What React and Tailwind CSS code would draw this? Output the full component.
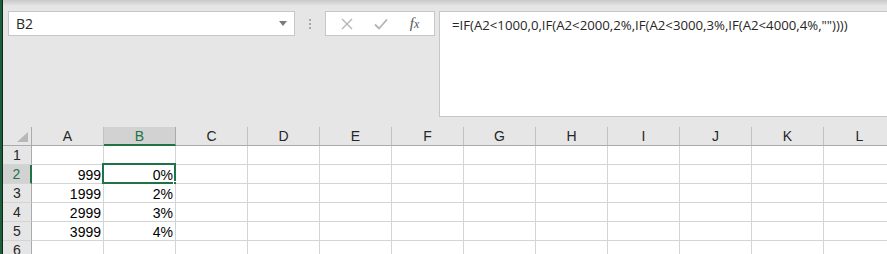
import React from 'react';

const cols = ['A', 'B', 'C', 'D', 'E', 'F', 'G', 'H', 'I', 'J', 'K', 'L'];

// rows of sheet data: [A, B]
const data = {
  2: ['999', '0%'],
  3: ['1999', '2%'],
  4: ['2999', '3%'],
  5: ['3999', '4%'],
};

const FORMULA = '=IF(A2<1000,0,IF(A2<2000,2%,IF(A2<3000,3%,IF(A2<4000,4%,""))))';

const ColHeader = ({ label }) => {
  const active = label === 'B';
  return (
    <div
      className={`h-[19px] flex items-center justify-center border-r text-[14px] leading-none ${
        active
          ? 'bg-[#d2d2d2] text-[#217346] border-b-2 border-b-[#217346] border-r-[#ababab]'
          : 'bg-[#e6e6e6] text-[#262626] border-b border-b-[#ababab] border-r-[#c0c0c0]'
      }`}
    >
      {label}
    </div>
  );
};

const RowHeader = ({ n }) => {
  const active = n === 2;
  return (
    <div
      className={`h-[19px] flex items-center justify-center border-b border-b-[#d4d4d4] text-[14px] leading-none ${
        active
          ? 'bg-[#d2d2d2] text-[#217346] border-r-2 border-r-[#217346]'
          : 'bg-[#e6e6e6] text-[#262626] border-r border-r-[#ababab]'
      }`}
    >
      {n}
    </div>
  );
};

const Cell = ({ value, selected }) => (
  <div className="relative h-[19px] bg-white border-r border-b border-[#d4d4d4] flex items-center justify-end pr-[2px] pt-[2px] text-[14px] leading-none text-black">
    {value}
    {selected && (
      <>
        <div className="absolute left-[-2px] top-[-2px] right-[-1px] bottom-[-1px] border-2 border-[#217346]" />
        <div className="absolute right-[-4px] bottom-[-4px] w-[6px] h-[6px] bg-[#217346] border border-white" />
      </>
    )}
  </div>
);

export default function App() {
  return (
    <div
      className="w-[887px] h-[254px] overflow-hidden flex bg-[#e6e6e6]"
      style={{ fontFamily: '"Liberation Sans", Arial, sans-serif' }}
    >
      {/* window edge */}
      <div className="w-[3px] shrink-0 bg-[#1d5e3a] border-r border-[#0f2a1c]" />

      <div className="flex-1 flex flex-col min-w-0">
        {/* top shadow */}
        <div className="h-[6px] shrink-0 bg-gradient-to-b from-[#c9c9c9] to-[#e6e6e6]" />

        {/* formula bar */}
        <div className="flex items-start pt-[5px] h-[116px] shrink-0">
          <div className="ml-[5px] w-[287px] h-[25px] bg-white border border-[#c6c6c6] flex items-center justify-between pl-[7px] pr-[7px]">
            <span className="text-[14px] text-[#262626]" style={{ fontFamily: '"Open Sans", sans-serif' }}>B2</span>
            <svg width="8" height="5" viewBox="0 0 8 5">
              <path d="M0 0h8L4 5z" fill="#7a7a7a" />
            </svg>
          </div>

          <div className="w-[30px] h-[25px] flex flex-col items-center justify-center gap-[2px]">
            <span className="w-[2px] h-[2px] bg-[#a8a8a8]" />
            <span className="w-[2px] h-[2px] bg-[#a8a8a8]" />
            <span className="w-[2px] h-[2px] bg-[#a8a8a8]" />
          </div>

          <div className="w-[110px] h-[25px] bg-white border border-[#c6c6c6] flex items-center justify-around px-[4px]">
            <svg width="12" height="12" viewBox="0 0 12 12">
              <path d="M1 1l10 10M11 1L1 11" stroke="#b3b3b3" strokeWidth="1.3" fill="none" />
            </svg>
            <svg width="14" height="12" viewBox="0 0 14 12">
              <path d="M1 6.5l4 4L13 1.5" stroke="#b3b3b3" strokeWidth="1.8" fill="none" />
            </svg>
            <span
              className="text-[15px] italic text-[#555] leading-none"
              style={{ fontFamily: '"Liberation Serif", serif' }}
            >
              f<span className="text-[12px]">x</span>
            </span>
          </div>

          <div className="ml-[4px] flex-1 h-[106px] bg-white border border-r-0 border-[#c6c6c6] pl-[12px] pt-[1px]">
            <span
              className="text-[13.2px] text-[#262626]"
              style={{ fontFamily: '"Open Sans", sans-serif' }}
            >
              {FORMULA}
            </span>
          </div>
        </div>

        <div className="h-[5px] shrink-0" />

        {/* grid */}
        <div className="grid grid-cols-[29px_repeat(12,72px)] shrink-0">
          <div className="h-[19px] bg-[#e6e6e6] border-r border-b border-[#ababab] flex items-end justify-end pr-[3px] pb-[3px]">
            <svg width="11" height="10" viewBox="0 0 11 10">
              <path d="M11 0V10H0z" fill="#b8b8b8" />
            </svg>
          </div>
          {cols.map((c) => (
            <ColHeader key={c} label={c} />
          ))}

          {[1, 2, 3, 4, 5, 6].map((r) => (
            <React.Fragment key={r}>
              <RowHeader n={r} />
              {cols.map((c, i) => (
                <Cell
                  key={c}
                  value={data[r] && i < 2 ? data[r][i] : ''}
                  selected={r === 2 && c === 'B'}
                />
              ))}
            </React.Fragment>
          ))}
        </div>
      </div>
    </div>
  );
}
